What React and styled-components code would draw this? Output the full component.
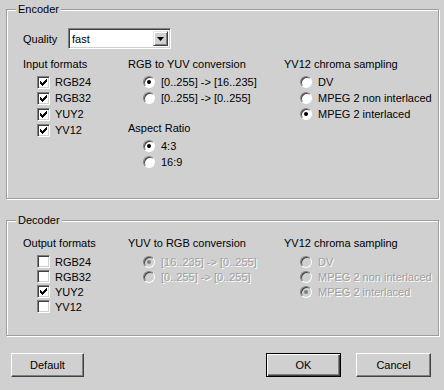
import React from "react";
import styled, { createGlobalStyle } from "styled-components";

const GlobalStyle = createGlobalStyle`
  html, body {
    margin: 0;
    padding: 0;
    background: #d0d0d0;
  }
  body {
    font-family: "Liberation Sans", Arial, sans-serif;
    font-size: 11px;
    color: #000;
  }
`;

const Dialog = styled.div`
  width: 444px;
  height: 390px;
  box-sizing: border-box;
  padding: 9px 0 0 6px;
  background: #d0d0d0;
`;

const GroupBox = styled.section`
  position: relative;
  box-sizing: border-box;
  width: 433px;
  height: ${(p) => p.$h}px;
  margin-top: ${(p) => p.$mt || 0}px;
  padding: ${(p) => p.$pt}px 0 0 16px;
  border: 1px solid #a09c98;
  box-shadow: inset 1px 1px 0 #fff, 1px 1px 0 #fff;
`;

const Legend = styled.span`
  position: absolute;
  top: -8px;
  left: 9px;
  padding: 0 2px;
  background: #d0d0d0;
  line-height: 14px;
`;

const QualityRow = styled.div`
  display: flex;
  align-items: center;
  height: 21px;
  margin-bottom: 8px;
`;

const FieldLabel = styled.span`
  width: 45px;
`;

const Combo = styled.div`
  display: flex;
  align-items: center;
  box-sizing: border-box;
  width: 103px;
  height: 21px;
  padding: 2px;
  background: #fff;
  border: 1px solid;
  border-color: #808080 #fff #fff #808080;
  box-shadow: inset 1px 1px 0 #404040, inset -1px -1px 0 #d0d0d0;
`;

const ComboText = styled.span`
  flex: 1;
  padding-left: 1px;
`;

const ComboButton = styled.div`
  display: flex;
  align-items: center;
  justify-content: center;
  box-sizing: border-box;
  width: 15px;
  height: 15px;
  background: #d0d0d0;
  border: 1px solid;
  border-color: #e8e8e8 #404040 #404040 #e8e8e8;
  box-shadow: inset 1px 1px 0 #fff, inset -1px -1px 0 #808080;
`;

const Columns = styled.div`
  display: grid;
  grid-template-columns: 105px 156px 1fr;
`;

const Column = styled.div`
  display: flex;
  flex-direction: column;
`;

const Heading = styled.div`
  height: 14px;
  line-height: 14px;
  margin-top: ${(p) => p.$mt || 0}px;
  margin-bottom: ${(p) => p.$mb ?? 3}px;
  white-space: nowrap;
`;

const Option = styled.label`
  display: flex;
  align-items: center;
  height: ${(p) => p.$rh || 16}px;
  padding-left: ${(p) => p.$indent}px;
  gap: ${(p) => p.$gap}px;
  white-space: nowrap;
  color: ${(p) => (p.$disabled ? "#a0a0a0" : "#000")};
  text-shadow: ${(p) => (p.$disabled ? "1px 1px 0 #fff" : "none")};
`;

const CheckBox = styled.span`
  display: flex;
  align-items: center;
  justify-content: center;
  box-sizing: border-box;
  width: 13px;
  height: 13px;
  background: #fff;
  border: 1px solid;
  border-color: #808080 #fff #fff #808080;
  box-shadow: inset 1px 1px 0 #404040, inset -1px -1px 0 #d0d0d0;
`;

const Radio = styled.span`
  display: flex;
  align-items: center;
  justify-content: center;
  box-sizing: border-box;
  width: 12px;
  height: 12px;
  border-radius: 50%;
  background: ${(p) => (p.$disabled ? "#d0d0d0" : "#fff")};
  border: 1px solid;
  border-color: #808080 #fff #fff #808080;
  box-shadow: inset 1px 1px 0 #404040;
`;

const Dot = styled.span`
  width: 4px;
  height: 4px;
  border-radius: 50%;
  background: ${(p) => (p.$disabled ? "#808080" : "#000")};
`;

const ButtonRow = styled.div`
  display: flex;
  margin-top: 17px;
  padding-left: 5px;
`;

const Button = styled.button`
  box-sizing: border-box;
  width: ${(p) => p.$w || 75}px;
  height: 24px;
  margin-left: ${(p) => p.$ml || 0}px;
  padding: 0;
  font-family: inherit;
  font-size: 11px;
  color: #000;
  background: #d0d0d0;
  border: 1px solid;
  border-color: #fff #404040 #404040 #fff;
  box-shadow: inset -1px -1px 0 #808080;
  outline: ${(p) => (p.$default ? "1px solid #000" : "none")};
  outline-offset: -1px;
  ${(p) =>
    p.$default &&
    `border-color: #000;
     box-shadow: inset 1px 1px 0 #fff, inset -1px -1px 0 #404040, inset -2px -2px 0 #808080;`}
`;

const Check = () => (
  <svg width="7" height="7" viewBox="0 0 7 7">
    <path
      d="M0 2h1v1h1v1h1V3h1V2h1V1h1V0h1v3H6v1H5v1H4v1H3v1H2V6H1V5H0z"
      fill="#000"
    />
  </svg>
);

const Arrow = () => (
  <svg width="7" height="4" viewBox="0 0 7 4">
    <path d="M0 0h7L3.5 4z" fill="#000" />
  </svg>
);

const CheckItem = ({ label, checked, rh }) => (
  <Option $indent={14} $gap={5} $rh={rh}>
    <CheckBox>{checked && <Check />}</CheckBox>
    {label}
  </Option>
);

const RadioItem = ({ label, checked, disabled, indent = 15, rh }) => (
  <Option $indent={indent} $gap={6} $disabled={disabled} $rh={rh}>
    <Radio $disabled={disabled}>{checked && <Dot $disabled={disabled} />}</Radio>
    {label}
  </Option>
);

export default function App() {
  return (
    <>
      <GlobalStyle />
      <Dialog>
        <GroupBox $h={190} $pt={18}>
          <Legend>Encoder</Legend>
          <QualityRow>
            <FieldLabel>Quality</FieldLabel>
            <Combo>
              <ComboText>fast</ComboText>
              <ComboButton>
                <Arrow />
              </ComboButton>
            </Combo>
          </QualityRow>
          <Columns>
            <Column>
              <Heading>Input formats</Heading>
              <CheckItem label="RGB24" checked />
              <CheckItem label="RGB32" checked />
              <CheckItem label="YUY2" checked />
              <CheckItem label="YV12" checked />
            </Column>
            <Column>
              <Heading>RGB to YUV conversion</Heading>
              <RadioItem label="[0..255] -> [16..235]" checked />
              <RadioItem label="[0..255] -> [0..255]" />
              <Heading $mt={15}>Aspect Ratio</Heading>
              <RadioItem label="4:3" checked />
              <RadioItem label="16:9" />
            </Column>
            <Column>
              <Heading>YV12 chroma sampling</Heading>
              <RadioItem label="DV" indent={16} />
              <RadioItem label="MPEG 2 non interlaced" indent={16} />
              <RadioItem label="MPEG 2 interlaced" indent={16} checked />
            </Column>
          </Columns>
        </GroupBox>

        <GroupBox $h={116} $pt={15} $mt={21}>
          <Legend>Decoder</Legend>
          <Columns>
            <Column>
              <Heading $mb={4}>Output formats</Heading>
              <CheckItem label="RGB24" rh={15} />
              <CheckItem label="RGB32" rh={15} />
              <CheckItem label="YUY2" rh={15} checked />
              <CheckItem label="YV12" rh={15} />
            </Column>
            <Column>
              <Heading $mb={4}>YUV to RGB conversion</Heading>
              <RadioItem label="[16..235] -> [0..255]" rh={15} checked disabled />
              <RadioItem label="[0..255] -> [0..255]" rh={15} disabled />
            </Column>
            <Column>
              <Heading $mb={4}>YV12 chroma sampling</Heading>
              <RadioItem label="DV" indent={16} rh={15} disabled />
              <RadioItem label="MPEG 2 non interlaced" indent={16} rh={15} disabled />
              <RadioItem label="MPEG 2 interlaced" indent={16} rh={15} checked disabled />
            </Column>
          </Columns>
        </GroupBox>

        <ButtonRow>
          <Button $w={73}>Default</Button>
          <Button $ml={182} $default>
            OK
          </Button>
          <Button $ml={15}>Cancel</Button>
        </ButtonRow>
      </Dialog>
    </>
  );
}
